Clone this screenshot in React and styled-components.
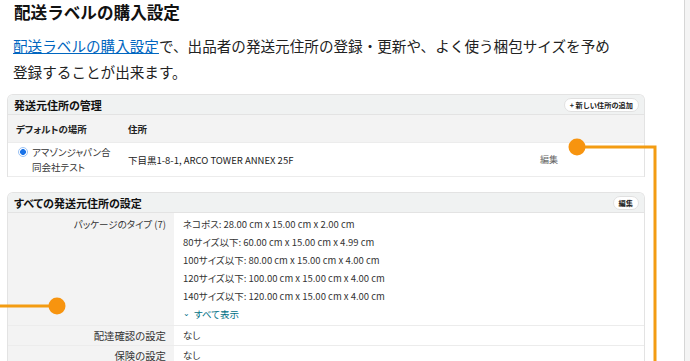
import React from 'react'
import styled, { createGlobalStyle } from 'styled-components'

const GlobalStyle = createGlobalStyle`
  html, body { margin: 0; padding: 0; background: #fff; }
  *, *::before, *::after { box-sizing: border-box; }
  body {
    font-family: "Noto Sans CJK JP", "Noto Sans", sans-serif;
    color: #111;
    overflow: hidden;
  }
`

const Page = styled.div`
  position: relative;
  display: flex;
  width: 690px;
  height: 361px;
  overflow: hidden;
`

const Main = styled.div`
  flex: 1;
  padding: 0 0 0 7px;
`

const ScrollTrack = styled.div`
  width: 6px;
  border-left: 1px solid #d6d6d6;
  background: #f4f4f4;
`

const Title = styled.h1`
  margin: 0;
  padding-left: 7px;
  font-size: 16.6px;
  line-height: 24px;
  font-weight: 700;
`

const Intro = styled.p`
  margin: 9px 0 0;
  padding-left: 6px;
  font-size: 14.6px;
  line-height: 26px;
  color: #222;
`

const IntroLink = styled.a`
  color: #0066c0;
  text-decoration: underline;
`

const Panel = styled.section`
  width: 638px;
  margin-top: ${p => p.$top}px;
  border: 1px solid #e3e3e3;
  border-bottom: none;
  border-radius: 6px 6px 0 0;
  overflow: hidden;
  font-feature-settings: "palt";
`

const PanelHead = styled.div`
  display: flex;
  align-items: center;
  justify-content: space-between;
  height: 20px;
  padding: 0 5px 0 6px;
  background: #f0f2f2;
  border-bottom: 1px solid #e3e3e3;
`

const PanelTitle = styled.h2`
  margin: 0;
  font-size: 11px;
  font-weight: 700;
  color: #111;
`

const SmallButton = styled.button`
  height: 14px;
  padding: 0 5px;
  border: 1px solid #e0e0e0;
  border-radius: 7px;
  background: #fff;
  font-family: inherit;
  font-size: 7.2px;
  font-weight: 700;
  color: #222;
  line-height: 12px;
`

const AddrGrid = styled.div`
  display: grid;
  grid-template-columns: 112px 412px 1fr;
  align-items: center;
  padding-left: 8px;
  height: ${p => p.$h}px;
  background: ${p => (p.$head ? '#f3f3f3' : '#fff')};
  border-bottom: 1px solid #ececec;
  font-size: 9.5px;
  font-weight: ${p => (p.$head ? 700 : 400)};
  color: #222;
`

const RadioName = styled.label`
  display: flex;
  align-items: flex-start;
  gap: 4px;
  padding-left: 2px;
  line-height: 15px;
  color: #333;
`

const Radio = styled.span`
  flex: none;
  width: 10px;
  height: 10px;
  margin-top: 2.5px;
  border-radius: 50%;
  border: 1.5px solid #9cc3f5;
  background: radial-gradient(circle, #1a73e8 0 2.6px, #fff 3.2px);
`

const EditText = styled.span`
  color: #666;
  font-size: 9px;
`

const SettingRow = styled.div`
  display: grid;
  grid-template-columns: 166px 1fr;
  height: ${p => p.$h}px;
  border-bottom: 1px solid #ececec;
  font-size: 9.5px;
  color: #333;
`

const SettingLabel = styled.div`
  background: #f3f3f3;
  text-align: right;
  padding: ${p => (p.$pad ? '2px 8px 0 0' : '0 8px 0 0')};
  line-height: ${p => (p.$pad ? '18px' : '19px')};
  font-size: ${p => (p.$pad ? '9.5px' : '10.4px')};
`

const SettingValues = styled.div`
  padding: ${p => (p.$pad ? '2px 0 0 9px' : '0 0 0 9px')};
  line-height: ${p => (p.$pad ? '18px' : '19px')};
`

const ShowAll = styled.a`
  color: #007185;
  text-decoration: none;
  &::before {
    content: '⌄';
    font-size: 8px;
    margin-right: 4px;
    position: relative;
    top: -2px;
  }
`

const Overlay = styled.svg`
  position: absolute;
  left: 0;
  top: 0;
  pointer-events: none;
`

const packages = [
  'ネコポス: 28.00 cm x 15.00 cm x 2.00 cm',
  '80サイズ以下: 60.00 cm x 15.00 cm x 4.99 cm',
  '100サイズ以下: 80.00 cm x 15.00 cm x 4.00 cm',
  '120サイズ以下: 100.00 cm x 15.00 cm x 4.00 cm',
  '140サイズ以下: 120.00 cm x 15.00 cm x 4.00 cm',
]

export default function App() {
  return (
    <Page>
      <GlobalStyle />
      <Main>
        <Title>配送ラベルの購入設定</Title>
        <Intro>
          <IntroLink href="#">配送ラベルの購入設定</IntroLink>で、出品者の発送元住所の登録・更新や、よく使う梱包サイズを予め
          <br />
          登録することが出来ます。
        </Intro>

        <Panel $top={9}>
          <PanelHead>
            <PanelTitle>発送元住所の管理</PanelTitle>
            <SmallButton>+ 新しい住所の追加</SmallButton>
          </PanelHead>
          <AddrGrid $head $h={28}>
            <span>デフォルトの場所</span>
            <span>住所</span>
            <span />
          </AddrGrid>
          <AddrGrid $h={34}>
            <RadioName>
              <Radio />
              <span>アマゾンジャパン合<br />同会社テスト</span>
            </RadioName>
            <span>下目黒1-8-1, ARCO TOWER ANNEX 25F</span>
            <EditText>編集</EditText>
          </AddrGrid>
        </Panel>

        <Panel $top={15}>
          <PanelHead>
            <PanelTitle>すべての発送元住所の設定</PanelTitle>
            <SmallButton>編集</SmallButton>
          </PanelHead>
          <SettingRow $h={113}>
            <SettingLabel $pad>パッケージのタイプ (7)</SettingLabel>
            <SettingValues $pad>
              {packages.map(p => <div key={p}>{p}</div>)}
              <ShowAll href="#">すべて表示</ShowAll>
            </SettingValues>
          </SettingRow>
          <SettingRow $h={20}>
            <SettingLabel>配達確認の設定</SettingLabel>
            <SettingValues>なし</SettingValues>
          </SettingRow>
          <SettingRow $h={20}>
            <SettingLabel>保険の設定</SettingLabel>
            <SettingValues>なし</SettingValues>
          </SettingRow>
        </Panel>
      </Main>
      <ScrollTrack />

      <Overlay width="690" height="361" viewBox="0 0 690 361">
        <path d="M577 147 H655 V361" fill="none" stroke="#f39c12" strokeWidth="3" />
        <circle cx="577" cy="147" r="8.5" fill="#f7940f" />
        <path d="M0 306 H57" fill="none" stroke="#f39c12" strokeWidth="3" />
        <circle cx="57" cy="306" r="8.5" fill="#f7940f" />
      </Overlay>
    </Page>
  )
}
